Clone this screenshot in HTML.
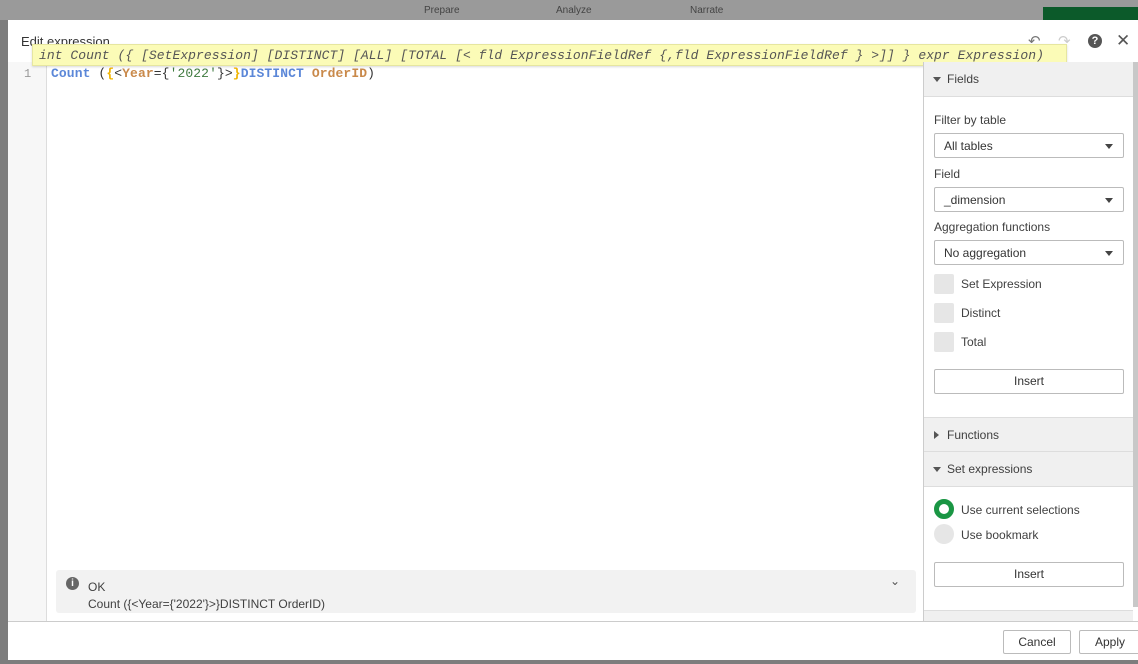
<!DOCTYPE html>
<html><head><meta charset="utf-8"><style>
*{box-sizing:border-box;margin:0;padding:0}
body{width:1138px;height:664px;overflow:hidden;background:#7d7d7d;font-family:"Liberation Sans",sans-serif;font-size:12px;color:#404040;position:relative}
.top{position:absolute;left:0;top:0;width:1138px;height:20px;background:#9a9a9a}
.top span{position:absolute;top:5px;font-size:10px;color:#444}
.modal{position:absolute;left:8px;top:20px;width:1130px;height:640px;background:#fff}
.title{position:absolute;left:13px;top:14px;font-size:13px;color:#333}
.gut{position:absolute;left:0;top:42px;width:39px;height:559px;background:#f7f7f7;border-right:1px solid #ddd}
.ln{position:absolute;left:16px;top:47px;font-family:"Liberation Mono",monospace;font-size:12px;color:#999}
.code{position:absolute;left:43px;top:46px;font-family:"Liberation Mono",monospace;font-size:13px;letter-spacing:0.1px;white-space:pre;font-weight:bold}
.tip{position:absolute;left:24px;top:24px;width:1035px;height:22px;background:#fbfbb7;border:1px solid #e6e6a0;font-family:"Liberation Mono",monospace;font-style:italic;font-size:13px;letter-spacing:0.05px;color:#555;padding:3px 6px;white-space:pre;box-shadow:0 1px 2px rgba(0,0,0,.15);overflow:hidden}
.info{position:absolute;left:48px;top:550px;width:860px;height:43px;background:#f2f2f2;border-radius:3px}
.panel{position:absolute;left:915px;top:42px;width:210px;height:559px;border-left:1px solid #ccc;background:#fff;overflow:hidden}
.hd{height:35px;background:#f0f0f0;border-bottom:1px solid #ddd;border-top:1px solid #ddd;padding:10px 0 0 23px;font-size:12px;color:#404040;position:relative}
.hd:before{content:"";position:absolute;left:9px;top:15px;border-left:4px solid transparent;border-right:4px solid transparent;border-top:5px solid #555}
.hd.c:before{left:10px;top:13px;border-top:4px solid transparent;border-bottom:4px solid transparent;border-left:5px solid #555;border-right:0}
.lab{position:absolute;left:10px;font-size:12px}
.sel{position:absolute;left:10px;width:190px;height:25px;border:1px solid #bbb;border-radius:2px;padding:5px 9px;font-size:12px;color:#333}
.sel:after{content:"";position:absolute;right:10px;top:10px;border-left:4px solid transparent;border-right:4px solid transparent;border-top:5px solid #444}
.cb{position:absolute;left:10px;width:20px;height:20px;background:#e6e6e6;border-radius:2px}
.btn{position:absolute;border:1px solid #bbb;border-radius:2px;background:#fff;text-align:center;font-size:12px;color:#333}
.foot{position:absolute;left:0;top:601px;width:1130px;border-top:1px solid #ccc}
</style></head><body>
<div class="top"><span style="left:424px">Prepare</span><span style="left:556px">Analyze</span><span style="left:690px">Narrate</span>
<div style="position:absolute;left:1043px;top:7px;width:95px;height:13px;background:#0c5a2a"></div></div>
<div class="modal">
<div class="title">Edit expression</div>
<div style="position:absolute;left:1020px;top:12px;font-size:15px;color:#777">&#8630;</div>
<div style="position:absolute;left:1050px;top:12px;font-size:15px;color:#ccc">&#8631;</div>
<div style="position:absolute;left:1080px;top:14px;width:14px;height:14px;border-radius:50%;background:#555;color:#fff;font-size:11px;font-weight:bold;text-align:center;line-height:14px">?</div>
<div style="position:absolute;left:1108px;top:11px;font-size:17px;color:#555">&#10005;</div>
<div class="gut"></div>
<div class="ln">1</div>
<div class="code"><span style="color:#5b87d8">Count</span> <span style="color:#333;font-weight:normal">(</span><span style="color:#f0b400">{</span><span style="color:#333;font-weight:normal">&lt;</span><span style="color:#c9894a">Year</span><span style="color:#333;font-weight:normal">={</span><span style="color:#3f7a3f;font-weight:normal">'2022'</span><span style="color:#333;font-weight:normal">}&gt;</span><span style="color:#f0b400">}</span><span style="color:#5b87d8">DISTINCT</span> <span style="color:#c9894a">OrderID</span><span style="color:#333;font-weight:normal">)</span></div>
<div class="tip">int Count ({ [SetExpression] [DISTINCT] [ALL] [TOTAL [&lt; fld ExpressionFieldRef {,fld ExpressionFieldRef } &gt;]] } expr Expression)</div>
<div class="info">
<div style="position:absolute;left:10px;top:7px;width:13px;height:13px;border-radius:50%;background:#666;color:#fff;font-size:10px;font-weight:bold;text-align:center;line-height:13px">i</div>
<div style="position:absolute;left:32px;top:10px;font-size:12px">OK</div>
<div style="position:absolute;left:32px;top:27px;font-size:12px">Count ({&lt;Year={'2022'}&gt;}DISTINCT OrderID)</div>
<div style="position:absolute;left:834px;top:4px;font-size:12px;color:#555">&#8964;</div>
</div>
<div class="panel">
<div class="hd" style="border-top:0">Fields</div>
<div class="lab" style="top:51px">Filter by table</div>
<div class="sel" style="top:71px">All tables</div>
<div class="lab" style="top:105px">Field</div>
<div class="sel" style="top:125px">_dimension</div>
<div class="lab" style="top:158px">Aggregation functions</div>
<div class="sel" style="top:178px">No aggregation</div>
<div class="cb" style="top:212px"></div><div class="lab" style="left:37px;top:215px">Set Expression</div>
<div class="cb" style="top:241px"></div><div class="lab" style="left:37px;top:244px">Distinct</div>
<div class="cb" style="top:270px"></div><div class="lab" style="left:37px;top:273px">Total</div>
<div class="btn" style="left:10px;top:307px;width:190px;height:25px;line-height:23px">Insert</div>
<div style="position:absolute;left:0;top:355px;width:210px">
<div class="hd c">Functions</div>
<div class="hd" style="border-top:0">Set expressions</div>
</div>
<div style="position:absolute;left:10px;top:437px;width:20px;height:20px;border-radius:50%;border:5px solid #1a9644;background:#fff"></div>
<div class="lab" style="left:37px;top:441px">Use current selections</div>
<div style="position:absolute;left:10px;top:462px;width:20px;height:20px;border-radius:50%;background:#e6e6e6"></div>
<div class="lab" style="left:37px;top:466px">Use bookmark</div>
<div class="btn" style="left:10px;top:500px;width:190px;height:25px;line-height:23px">Insert</div>
<div style="position:absolute;left:0;top:548px;width:210px;height:12px;background:#f0f0f0;border-top:1px solid #ddd"></div>
</div>
<div style="position:absolute;left:1125px;top:42px;width:5px;height:545px;background:#c8c8c8"></div>
<div class="foot"></div>
<div class="btn" style="left:995px;top:610px;width:68px;height:24px;line-height:22px">Cancel</div>
<div class="btn" style="left:1071px;top:610px;width:62px;height:24px;line-height:22px">Apply</div>
</div>
</body></html>
